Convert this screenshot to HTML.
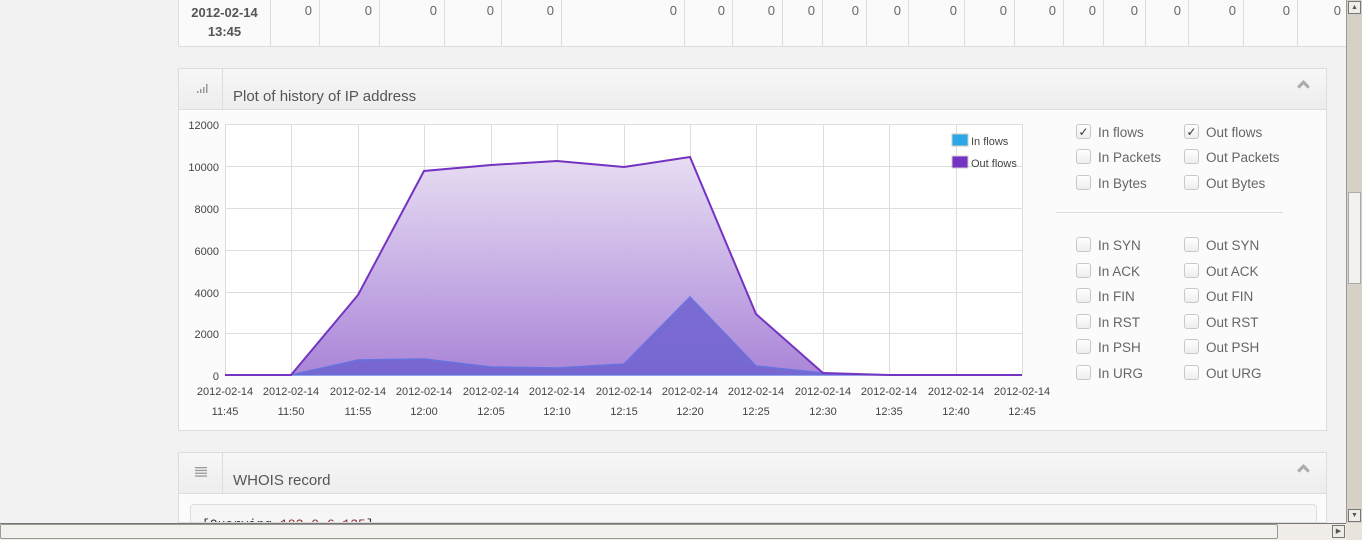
<!DOCTYPE html>
<html style="width:1362px;height:540px;overflow:hidden"><head><meta charset="utf-8"><style>
*{margin:0;padding:0;box-sizing:border-box}
body{width:1362px;height:540px;overflow:hidden;background:#f2f2f2;font-family:"Liberation Sans",sans-serif;position:relative;color:#555}
.abs{position:absolute}
.tbl{left:178px;top:-2px;width:1170px;height:49px;background:#fafafa;border:1px solid #ddd;border-top:none}
.cell{position:absolute;top:0;height:48px;border-left:1px solid #ddd;font-size:13px;color:#666;text-align:right;padding:5px 7px 0 0}
.panel{background:#fbfbfb;border:1px solid #ddd;left:178px;width:1149px;overflow:hidden}
.hdr{position:absolute;left:0;top:0;right:0;height:41px;background:linear-gradient(#f7f7f7,#ededed);border-bottom:1px solid #ddd}
.ico{position:absolute;left:0;top:0;width:44px;height:40px;border-right:1px solid #ddd}
.title{position:absolute;left:54px;top:19px;font-size:15px;color:#555}
.chev{position:absolute;right:18px;top:13px;width:9px;height:9px;border-left:3px solid #aaa;border-top:3px solid #aaa;transform:rotate(45deg)}
.cb{position:absolute;font-size:13.5px;color:#666}
.cb i{position:absolute;left:0;top:-1px;width:15px;height:15px;border:1px solid #c8c8c8;border-radius:3px;background:linear-gradient(#fff,#eee);font-style:normal;font-size:12px;color:#333;text-align:center;line-height:14px}
.cb span{position:absolute;left:22px;top:0;white-space:nowrap}
</style></head><body>
<div class="abs tbl">
<div class="abs" style="left:0;top:5px;width:91px;text-align:center;font-weight:bold;font-size:13px;color:#555;line-height:19px">2012-02-14<br>13:45</div>
<div class="cell" style="left:91px;width:49px">0</div>
<div class="cell" style="left:140px;width:60px">0</div>
<div class="cell" style="left:200px;width:65px">0</div>
<div class="cell" style="left:265px;width:57px">0</div>
<div class="cell" style="left:322px;width:60px">0</div>
<div class="cell" style="left:382px;width:123px">0</div>
<div class="cell" style="left:505px;width:48px">0</div>
<div class="cell" style="left:553px;width:50px">0</div>
<div class="cell" style="left:603px;width:40px">0</div>
<div class="cell" style="left:643px;width:44px">0</div>
<div class="cell" style="left:687px;width:42px">0</div>
<div class="cell" style="left:729px;width:56px">0</div>
<div class="cell" style="left:785px;width:50px">0</div>
<div class="cell" style="left:835px;width:49px">0</div>
<div class="cell" style="left:884px;width:40px">0</div>
<div class="cell" style="left:924px;width:42px">0</div>
<div class="cell" style="left:966px;width:43px">0</div>
<div class="cell" style="left:1009px;width:55px">0</div>
<div class="cell" style="left:1064px;width:54px">0</div>
<div class="cell" style="left:1118px;width:51px">0</div>
<div class="cell" style="left:1169px;width:60px;text-align:left;padding-left:36px">0</div>
</div>

<div class="abs panel" style="top:68px;height:363px">
<div class="hdr"><div class="ico">
<svg class="abs" style="left:18px;top:15px" width="11" height="10"><rect x="0" y="7" width="1.5" height="2" fill="#999"/><rect x="3" y="5" width="1.5" height="4" fill="#999"/><rect x="6" y="3" width="1.5" height="6" fill="#999"/><rect x="9" y="0" width="1.5" height="9" fill="#999"/></svg>
</div><div class="title">Plot of history of IP address</div><div class="chev"></div></div>
</div>

<svg class="abs" style="left:0;top:0" width="1362" height="540" font-family="Liberation Sans,sans-serif">
<defs><linearGradient id="g" x1="0" y1="0" x2="0" y2="1"><stop offset="0" stop-color="#e6dcf2"/><stop offset="1" stop-color="#a67fd6"/></linearGradient></defs>
<rect x="225" y="124" width="797" height="251" fill="#fff"/>
<g stroke="#ddd" stroke-width="1">
<line x1="225" y1="124.5" x2="1022" y2="124.5"/><line x1="225" y1="166.5" x2="1022" y2="166.5"/><line x1="225" y1="208.5" x2="1022" y2="208.5"/><line x1="225" y1="250.5" x2="1022" y2="250.5"/><line x1="225" y1="292.5" x2="1022" y2="292.5"/><line x1="225" y1="333.5" x2="1022" y2="333.5"/>
<line x1="225.5" y1="124" x2="225.5" y2="375"/><line x1="291.5" y1="124" x2="291.5" y2="375"/><line x1="358.5" y1="124" x2="358.5" y2="375"/><line x1="424.5" y1="124" x2="424.5" y2="375"/><line x1="491.5" y1="124" x2="491.5" y2="375"/><line x1="557.5" y1="124" x2="557.5" y2="375"/><line x1="624.5" y1="124" x2="624.5" y2="375"/><line x1="690.5" y1="124" x2="690.5" y2="375"/><line x1="756.5" y1="124" x2="756.5" y2="375"/><line x1="823.5" y1="124" x2="823.5" y2="375"/><line x1="889.5" y1="124" x2="889.5" y2="375"/><line x1="956.5" y1="124" x2="956.5" y2="375"/><line x1="1022.5" y1="124" x2="1022.5" y2="375"/>
</g>
<path d="M225,375 L291,375 L358,295 L424,171 L491,165 L557,161 L624,167 L690,157 L756,314 L823,373 L889,375 L956,375 L1022,375 Z" fill="url(#g)" opacity="0.95"/>
<path d="M225,375 L291,375 L358,360 L424,359 L491,367 L557,368 L624,364 L690,297 L756,366 L823,373 L889,375 L956,375 L1022,375 Z" fill="#6f62d0" opacity="0.85" stroke="#5a6ee0" stroke-width="1.5"/>
<path d="M225,375 L291,375 L358,295 L424,171 L491,165 L557,161 L624,167 L690,157 L756,314 L823,373 L889,375 L956,375 L1022,375" fill="none" stroke="#7433c0" stroke-width="2"/>
<g font-size="11" fill="#444" text-anchor="end">
<text x="219" y="129">12000</text><text x="219" y="171">10000</text><text x="219" y="213">8000</text><text x="219" y="255">6000</text><text x="219" y="297">4000</text><text x="219" y="338">2000</text><text x="219" y="380">0</text></g>
<g font-size="11" fill="#444" text-anchor="middle">
<text x="225" y="395">2012-02-14</text><text x="225" y="415">11:45</text>
<text x="291" y="395">2012-02-14</text><text x="291" y="415">11:50</text>
<text x="358" y="395">2012-02-14</text><text x="358" y="415">11:55</text>
<text x="424" y="395">2012-02-14</text><text x="424" y="415">12:00</text>
<text x="491" y="395">2012-02-14</text><text x="491" y="415">12:05</text>
<text x="557" y="395">2012-02-14</text><text x="557" y="415">12:10</text>
<text x="624" y="395">2012-02-14</text><text x="624" y="415">12:15</text>
<text x="690" y="395">2012-02-14</text><text x="690" y="415">12:20</text>
<text x="756" y="395">2012-02-14</text><text x="756" y="415">12:25</text>
<text x="823" y="395">2012-02-14</text><text x="823" y="415">12:30</text>
<text x="889" y="395">2012-02-14</text><text x="889" y="415">12:35</text>
<text x="956" y="395">2012-02-14</text><text x="956" y="415">12:40</text>
<text x="1022" y="395">2012-02-14</text><text x="1022" y="415">12:45</text>
</g>
<rect x="952" y="134" width="16" height="12" fill="#2aa8e8" stroke="#ccc"/><text x="971" y="145" font-size="11" fill="#444">In flows</text>
<rect x="952" y="156" width="16" height="12" fill="#7433c0" stroke="#ccc"/><text x="971" y="167" font-size="11" fill="#444">Out flows</text>
<line x1="1056" y1="212.5" x2="1283" y2="212.5" stroke="#ddd"/>
</svg>

<div class="cb" style="left:1076px;top:125px"><i>✓</i><span>In flows</span></div>
<div class="cb" style="left:1184px;top:125px"><i>✓</i><span>Out flows</span></div>
<div class="cb" style="left:1076px;top:150px"><i></i><span>In Packets</span></div>
<div class="cb" style="left:1184px;top:150px"><i></i><span>Out Packets</span></div>
<div class="cb" style="left:1076px;top:176px"><i></i><span>In Bytes</span></div>
<div class="cb" style="left:1184px;top:176px"><i></i><span>Out Bytes</span></div>
<div class="cb" style="left:1076px;top:238px"><i></i><span>In SYN</span></div>
<div class="cb" style="left:1184px;top:238px"><i></i><span>Out SYN</span></div>
<div class="cb" style="left:1076px;top:264px"><i></i><span>In ACK</span></div>
<div class="cb" style="left:1184px;top:264px"><i></i><span>Out ACK</span></div>
<div class="cb" style="left:1076px;top:289px"><i></i><span>In FIN</span></div>
<div class="cb" style="left:1184px;top:289px"><i></i><span>Out FIN</span></div>
<div class="cb" style="left:1076px;top:315px"><i></i><span>In RST</span></div>
<div class="cb" style="left:1184px;top:315px"><i></i><span>Out RST</span></div>
<div class="cb" style="left:1076px;top:340px"><i></i><span>In PSH</span></div>
<div class="cb" style="left:1184px;top:340px"><i></i><span>Out PSH</span></div>
<div class="cb" style="left:1076px;top:366px"><i></i><span>In URG</span></div>
<div class="cb" style="left:1184px;top:366px"><i></i><span>Out URG</span></div>

<div class="abs panel" style="top:452px;height:71px">
<div class="hdr"><div class="ico">
<svg class="abs" style="left:16px;top:14px" width="12" height="10"><g fill="#999"><rect y="0" width="12" height="1.3"/><rect y="2.8" width="12" height="1.3"/><rect y="5.6" width="12" height="1.3"/><rect y="8.4" width="12" height="1.3"/></g></svg>
</div><div class="title">WHOIS record</div><div class="chev"></div></div>
<div class="abs" style="left:11px;top:51px;width:1127px;height:40px;background:#f6f6f6;border:1px solid #ddd;border-radius:4px;font-family:'Liberation Mono',monospace;font-size:13px;color:#333;padding:12px 0 0 11px">[Querying <span style="color:#8b2a2a">193.0.6.135</span>]</div>
</div>

<div class="abs" style="left:1346px;top:0;width:16px;height:523px;background:#d6d0c6;border-left:1px solid #999">
<div class="abs" style="left:1px;top:1px;width:13px;height:13px;background:#f0ede8;border:1px solid #777;font-size:7px;text-align:center;line-height:12px">▲</div>
<div class="abs" style="left:1px;top:192px;width:13px;height:92px;background:#f3f1ed;border:1px solid #aaa"></div>
<div class="abs" style="left:1px;top:509px;width:13px;height:13px;background:#f0ede8;border:1px solid #777;font-size:7px;text-align:center;line-height:12px">▼</div>
</div>
<div class="abs" style="left:0;top:523px;width:1346px;height:17px;background:#f0ede8;border-top:1px solid #777">
<div class="abs" style="left:0;top:0;width:1278px;height:15px;background:#f3f1ed;border:1px solid #999;border-radius:2px"></div>
<div class="abs" style="left:1332px;top:1px;width:13px;height:13px;border:1px solid #777;font-size:7px;text-align:center;line-height:12px">▶</div>
</div>
<div class="abs" style="left:1346px;top:523px;width:16px;height:17px;background:#e8e4dc"></div>
</body></html>
